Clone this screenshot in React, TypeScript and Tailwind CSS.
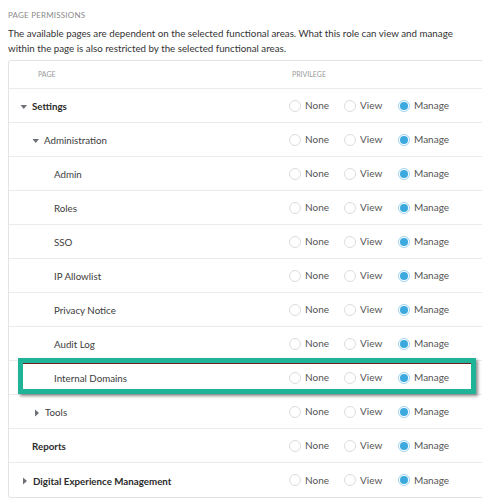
import React from "react";

type Row = {
  label: string;
  indent: number;
  bold?: boolean;
  caret?: "down" | "right";
  highlight?: boolean;
};

const rows: Row[] = [
  { label: "Settings", indent: 11, bold: true, caret: "down" },
  { label: "Administration", indent: 23, caret: "down" },
  { label: "Admin", indent: 45 },
  { label: "Roles", indent: 45 },
  { label: "SSO", indent: 45 },
  { label: "IP Allowlist", indent: 45 },
  { label: "Privacy Notice", indent: 45 },
  { label: "Audit Log", indent: 45 },
  { label: "Internal Domains", indent: 45, highlight: true },
  { label: "Tools", indent: 24, caret: "right" },
  { label: "Reports", indent: 23, bold: true },
  { label: "Digital Experience Management", indent: 12, bold: true, caret: "right" },
];

function Caret({ dir }: { dir: "down" | "right" }) {
  return (
    <svg width="8" height="8" viewBox="0 0 8 8" className="mr-[4px] shrink-0">
      {dir === "down" ? (
        <path d="M0.5 2 L7 2 L3.75 6 Z" fill="#6b6f76" />
      ) : (
        <path d="M2 0.5 L6 4 L2 7.5 Z" fill="#6b6f76" />
      )}
    </svg>
  );
}

function Radio({ checked, label, width }: { checked?: boolean; label: string; width: string }) {
  return (
    <div className={`flex items-center ${width}`}>
      {checked ? (
        <span className="flex h-[12px] w-[12px] items-center justify-center rounded-full border border-[#9fd3ee] bg-white">
          <span className="h-[8px] w-[8px] rounded-full bg-[#3ba9de]" />
        </span>
      ) : (
        <span className="h-[12px] w-[12px] rounded-full border border-[#dcdcdc] bg-white" />
      )}
      <span className="ml-[4px] text-[10px] text-[#555]">{label}</span>
    </div>
  );
}

export default function App() {
  return (
    <div className="h-[504px] w-[482px] overflow-hidden bg-white font-['Lato',sans-serif]">
      <div className="pl-[8px] pt-[9px]">
        <div className="text-[8px] tracking-[0.2px] text-[#8a8a8a]">PAGE PERMISSIONS</div>
        <p className="mt-[5px] w-[470px] text-[9.75px] leading-[15px] text-[#333]">
          The available pages are dependent on the selected functional areas. What this role can view and manage within the page is also restricted by the selected functional areas.
        </p>
        <div className="mt-[4px] w-[500px] rounded-[3px] border border-[#e3e3e3]">
          <div className="flex h-[28px] items-center border-b border-[#ebebeb] text-[7px] text-[#9a9a9a]">
            <div className="w-[280px] pl-[29px]">PAGE</div>
            <div className="pl-[3px]">PRIVILEGE</div>
          </div>
          {rows.map((r, i) => (
            <div
              key={r.label}
              className={`relative flex h-[34px] items-center ${i < rows.length - 1 ? "border-b border-[#ebebeb]" : ""}`}
            >
              <div className="flex w-[280px] items-center pt-[2px]" style={{ paddingLeft: r.indent }}>
                {r.caret && <Caret dir={r.caret} />}
                <span
                  className={`text-[9.75px] ${r.bold ? "font-bold text-[#2b2b2b]" : "text-[#3c3c3c]"}`}
                >
                  {r.label}
                </span>
              </div>
              <div className="flex items-center">
                <Radio label="None" width="w-[55px]" />
                <Radio label="View" width="w-[54px]" />
                <Radio label="Manage" checked width="w-[60px]" />
              </div>
              {r.highlight && (
                <div className="absolute left-[9px] top-[-3px] h-[36px] w-[458px] border-[5px] border-[#1fb397] shadow-[2px_2px_3px_rgba(0,0,0,0.45),inset_0_1px_0_#6e2020]" />
              )}
            </div>
          ))}
        </div>
      </div>
    </div>
  );
}
